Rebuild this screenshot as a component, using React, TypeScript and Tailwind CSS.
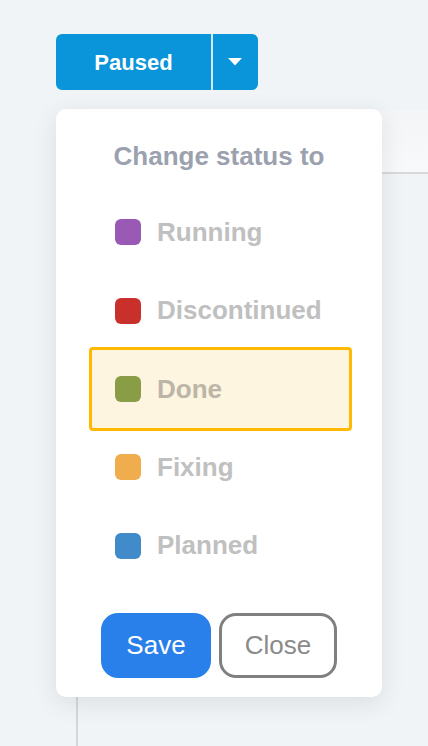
import React from 'react';

type Status = {
  label: string;
  color: string;
  selected?: boolean;
};

const statuses: Status[] = [
  { label: 'Running', color: 'bg-[#9b59b6]' },
  { label: 'Discontinued', color: 'bg-[#c9302c]' },
  { label: 'Done', color: 'bg-[#889d45]', selected: true },
  { label: 'Fixing', color: 'bg-[#f0ad4e]' },
  { label: 'Planned', color: 'bg-[#428bca]' },
];

const App: React.FC = () => {
  return (
    <div className="h-[746px] w-full overflow-hidden bg-[#f1f4f6] font-['Liberation_Sans',Arial,sans-serif]">
      <div className="pl-[56px] pt-[34px]">
        <div className="relative inline-flex">
          {/* Split status button */}
          <div className="flex h-[56px] overflow-hidden rounded-[6px] bg-[#0a95da]">
            <button className="w-[155px] text-[22px] font-bold text-white">Paused</button>
            <div className="w-[1.5px] bg-[#cfe9f7]" />
            <button className="flex w-[45.5px] items-center justify-center">
              <svg width="14" height="8" viewBox="0 0 14 8" aria-hidden="true">
                <path d="M0 0 L14 0 L7 7.5 Z" fill="#ffffff" />
              </svg>
            </button>
          </div>

          {/* Dropdown */}
          <div className="absolute left-0 top-[75px] z-10 flex h-[588px] w-[326px] flex-col rounded-[10px] bg-white shadow-[0_6px_24px_rgba(30,40,60,0.10)]">
            <h2 className="pt-[32px] text-center text-[26px] leading-[30px] font-bold text-[#9ba1ae]">
              Change status to
            </h2>
            <ul className="mt-[22px] pl-[33px] pr-[30px]">
              {statuses.map((s) =>
                s.selected ? (
                  <li
                    key={s.label}
                    className="relative z-10 -my-[3px] flex h-[84px] items-center gap-[16px] rounded-[4px] border-[3px] border-[#ffb900] bg-[#fdf5df] pl-[23px]"
                  >
                    <span className={`h-[26px] w-[26px] rounded-[6px] ${s.color}`} />
                    <span className="text-[26px] font-bold text-[#bcb5a8]">{s.label}</span>
                  </li>
                ) : (
                  <li key={s.label} className="flex h-[78.5px] items-center gap-[16px] pl-[26px]">
                    <span className={`h-[26px] w-[26px] rounded-[6px] ${s.color}`} />
                    <span className="text-[26px] font-bold text-[#c0c0c0]">{s.label}</span>
                  </li>
                )
              )}
            </ul>
            <div className="mt-[28px] flex justify-center gap-[8px]">
              <button className="h-[65px] w-[110px] rounded-[17px] bg-[#2a80ea] text-[26px] text-white">
                Save
              </button>
              <button className="h-[65px] w-[118px] rounded-[17px] border-[3px] border-[#808080] bg-white text-[26px] text-[#8a8a8a]">
                Close
              </button>
            </div>
          </div>
        </div>
      </div>

      {/* Background panel behind the dropdown */}
      <div className="ml-[76px] mt-[20px]">
        <div className="h-[64px] border-b-2 border-[#d9d9d9] bg-gradient-to-b from-[#f3f5f7] to-[#f7f9fa]" />
        <div className="h-[600px] border-l-2 border-[#d6d6d6] bg-[#f1f4f6]" />
      </div>
    </div>
  );
};

export default App;
